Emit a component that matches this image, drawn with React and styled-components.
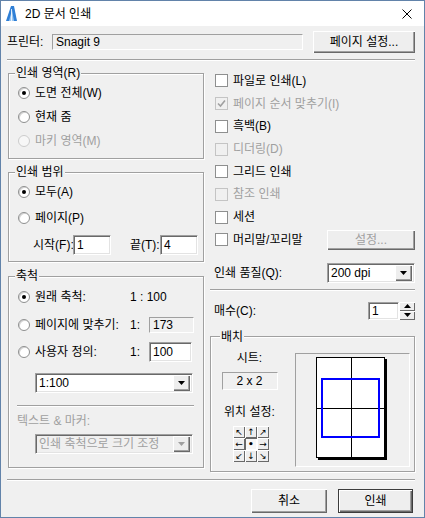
import styled, {createGlobalStyle} from 'styled-components'

const GlobalStyle = createGlobalStyle`
  html, body {
    margin: 0;
    padding: 0;
    background: #ffffff;
  }
  body {
    font-family: "Liberation Sans", "Noto Sans CJK KR", sans-serif;
    font-size: 12px;
    color: #000000;
  }
  * {
    box-sizing: border-box;
  }
`

const DownArrow = ({color = '#000'}) => (
  <svg width="7" height="4" viewBox="0 0 7 4">
    <path d="M0 0H7L3.5 4Z" fill={color} />
  </svg>
)

const UpArrow = () => (
  <svg width="7" height="4" viewBox="0 0 7 4">
    <path d="M0 4H7L3.5 0Z" fill="#000" />
  </svg>
)

const Combo = ({width, text, disabled}) => (
  <ComboBox $w={width} $disabled={disabled}>
    <ComboText $disabled={disabled}>{text}</ComboText>
    <DropButton>
      <DownArrow color={disabled ? '#a0a0a0' : '#000'} />
    </DropButton>
  </ComboBox>
)

const Radio = ({checked, disabled, children, labelWidth}) => (
  <RadioLabel>
    <RadioCircle $checked={checked} $disabled={disabled} />
    <OptionText $disabled={disabled} $w={labelWidth}>
      {children}
    </OptionText>
  </RadioLabel>
)

const Check = ({checked, disabled, children}) => (
  <CheckRow>
    <CheckBox $disabled={disabled}>
      {checked && (
        <svg width="9" height="9" viewBox="0 0 9 9">
          <path d="M1 4.5L3.5 7L8 1.5" stroke={disabled ? '#a0a0a0' : '#000'} strokeWidth="1.6" fill="none" />
        </svg>
      )}
    </CheckBox>
    <OptionText $disabled={disabled}>{children}</OptionText>
  </CheckRow>
)

const arrows = ['↖', '↑', '↗', '←', '•', '→', '↙', '↓', '↘']

export default function App() {
  return (
    <>
      <GlobalStyle />
      <Window>
        <TitleBar>
          <svg width="13" height="15" viewBox="0 0 13 15">
            <path d="M1 15L6 0H9L12 15Z" fill="#2f7fd6" />
            <path d="M4 15L7 4L9 15Z" fill="#9cc8f2" />
            <path d="M6.5 3V15" stroke="#ffffff" strokeWidth="0.8" />
          </svg>
          <TitleText>2D 문서 인쇄</TitleText>
          <CloseIcon width="14" height="10" viewBox="0 0 10 10">
            <path d="M0.5 0.5L9.5 9.5M9.5 0.5L0.5 9.5" stroke="#000" strokeWidth="1" />
          </CloseIcon>
        </TitleBar>

        <Content>
          <PrinterRow>
            <PrinterLabel>프린터:</PrinterLabel>
            <Field $w={251} $h={16} $flat $ro>Snagit 9</Field>
            <Button $w={102} $h={22} $push>
              페이지 설정...
            </Button>
          </PrinterRow>

          <Etched $mt={6} />

          <Columns>
            <LeftColumn>
              <Group $mt={5}>
                <Legend>인쇄 영역(R)</Legend>
                <GroupBody $pad="1px 0 5px 9px">
                  <RadioRow $h={24}>
                    <Radio checked>도면 전체(W)</Radio>
                  </RadioRow>
                  <RadioRow $h={24}>
                    <Radio>현재 줌</Radio>
                  </RadioRow>
                  <RadioRow $h={24}>
                    <Radio disabled>마키 영역(M)</Radio>
                  </RadioRow>
                </GroupBody>
              </Group>

              <Group $mt={6}>
                <Legend>인쇄 범위</Legend>
                <GroupBody $pad="0 0 6px 9px">
                  <RadioRow $h={26}>
                    <Radio checked>모두(A)</Radio>
                  </RadioRow>
                  <RadioRow $h={26}>
                    <Radio>페이지(P)</Radio>
                  </RadioRow>
                  <RangeRow>
                    <RangeLabel $w={40}>시작(F):</RangeLabel>
                    <Field $w={38} $h={20}>1</Field>
                    <RangeLabel $w={30} $ml={19}>끝(T):</RangeLabel>
                    <Field $w={38} $h={20}>4</Field>
                  </RangeRow>
                </GroupBody>
              </Group>

              <Group $mt={7}>
                <Legend>축척</Legend>
                <GroupBody $pad="0.5px 0 0 9px">
                  <RadioRow $h={27.5}>
                    <Radio checked labelWidth={95}>원래 축척:</Radio>
                    <ScaleValue>1 : 100</ScaleValue>
                  </RadioRow>
                  <RadioRow $h={27.5}>
                    <Radio labelWidth={95}>페이지에 맞추기:</Radio>
                    <ScaleValue $w={19}>1:</ScaleValue>
                    <Field $w={45} $h={16} $flat $ro>173</Field>
                  </RadioRow>
                  <RadioRow $h={27.5}>
                    <Radio labelWidth={95}>사용자 정의:</Radio>
                    <ScaleValue $w={19}>1:</ScaleValue>
                    <Field $w={43} $h={20}>100</Field>
                  </RadioRow>
                </GroupBody>
                <ComboIndent $mt={7}>
                  <Combo width={158} text="1:100" />
                </ComboIndent>
                <GroupRule />
                <TextMarkerLabel>텍스트 &amp; 마커:</TextMarkerLabel>
                <ComboIndent $mt={6}>
                  <Combo width={158} text="인쇄 축척으로 크기 조정" disabled />
                </ComboIndent>
                <GroupSpacer $h={13} />
              </Group>
            </LeftColumn>

            <RightColumn>
              <CheckList>
                <Check>파일로 인쇄(L)</Check>
                <Check checked disabled>페이지 순서 맞추기(I)</Check>
                <Check>흑백(B)</Check>
                <Check disabled>디더링(D)</Check>
                <Check>그리드 인쇄</Check>
                <Check disabled>참조 인쇄</Check>
                <Check>세션</Check>
                <CheckRow>
                  <CheckBox />
                  <OptionText>머리말/꼬리말</OptionText>
                  <Button $w={88} $h={20} $push disabled>
                    설정...
                  </Button>
                </CheckRow>
              </CheckList>

              <SettingRow $mt={11.6} $h={20}>
                <SettingLabel>인쇄 품질(Q):</SettingLabel>
                <Combo width={88} text="200 dpi" />
              </SettingRow>

              <Etched $mt={6} />

              <SettingRow $mt={11} $h={18}>
                <SettingLabel>매수(C):</SettingLabel>
                <Spin>
                  <Field $w={31} $h={18}>1</Field>
                  <SpinButtons>
                    <SpinButton>
                      <UpArrow />
                    </SpinButton>
                    <SpinButton>
                      <DownArrow />
                    </SpinButton>
                  </SpinButtons>
                </Spin>
              </SettingRow>

              <Group $mt={10}>
                <Legend $ml={9}>배치</Legend>
                <LayoutBody>
                  <LayoutSide>
                    <CenterText $mt={7}>시트:</CenterText>
                    <Field $w={56} $h={18} $flat $ro $center $mt={7}>
                      2 x 2
                    </Field>
                    <CenterText $mt={15}>위치 설정:</CenterText>
                    <PositionGrid>
                      {arrows.map((a, i) => (
                        <PositionButton key={i} $active={i === 4}>
                          {a}
                        </PositionButton>
                      ))}
                    </PositionGrid>
                  </LayoutSide>
                  <Preview>
                    <svg width="113" height="112" viewBox="0 0 113 112">
                      <rect x="22" y="5" width="69" height="101" fill="#000" />
                      <rect x="20.5" y="3.5" width="68" height="100" fill="#fff" stroke="#000" strokeWidth="1" />
                      <path d="M55.5 4V103M21 54.5H88" stroke="#000" strokeWidth="1" />
                      <rect x="26" y="25" width="57" height="58" fill="none" stroke="#0000ff" strokeWidth="2" />
                    </svg>
                  </Preview>
                </LayoutBody>
              </Group>
            </RightColumn>
          </Columns>

          <Etched $mt={7} />

          <Footer>
            <Button $w={76} $h={24}>취소</Button>
            <Button $w={75} $h={24} $default>
              인쇄
            </Button>
          </Footer>
        </Content>
      </Window>
    </>
  )
}

const Window = styled.div`
  width: 425px;
  height: 518px;
  border: 1px solid #6283aa;
  background-color: #f0f0f0;
  display: flex;
  flex-direction: column;
  overflow: hidden;
`

const TitleBar = styled.div`
  height: 25px;
  background-color: #ffffff;
  display: flex;
  align-items: center;
  padding-left: 4px;
  flex-shrink: 0;
`

const TitleText = styled.span`
  margin-left: 7px;
  font-size: 12px;
  line-height: 14px;
  color: #000000;
`

const CloseIcon = styled.svg`
  margin-left: auto;
  margin-right: 10px;
`

const Content = styled.div`
  padding: 5px 9px 0 6px;
  display: flex;
  flex-direction: column;
`

const PrinterRow = styled.div`
  height: 22px;
  display: flex;
  align-items: center;
`

const PrinterLabel = styled.span`
  width: 45px;
  line-height: 14px;
`

const Field = styled.div`
  width: ${p => p.$w}px;
  height: ${p => p.$h}px;
  margin-top: ${p => p.$mt || 0}px;
  background-color: ${p => (p.$ro ? '#f0f0f0' : '#ffffff')};
  border: 1px solid;
  border-color: #a0a0a0 #ffffff #ffffff #a0a0a0;
  box-shadow: ${p => (p.$flat ? 'none' : 'inset 1px 1px 0 #696969, inset -1px -1px 0 #e3e3e3')};
  display: flex;
  align-items: center;
  justify-content: ${p => (p.$center ? 'center' : 'flex-start')};
  padding-left: ${p => (p.$center ? 0 : 3)}px;
  line-height: 14px;
  white-space: nowrap;
  flex-shrink: 0;
`

const Button = styled.button`
  width: ${p => p.$w}px;
  height: ${p => p.$h}px;
  margin-left: ${p => (p.$push ? 'auto' : '0')};
  font: inherit;
  line-height: 14px;
  color: ${p => (p.disabled ? '#a0a0a0' : '#000000')};
  background-color: #eeeeee;
  border: ${p => (p.$default ? '1px solid #3c3c3c' : 'none')};
  box-shadow: inset 1px 1px 0 #ffffff, inset -1px -1px 0 #696969, inset -2px -2px 0 #a0a0a0;
  padding: 0;
  outline: none;
  flex-shrink: 0;
`

const Etched = styled.div`
  height: 2px;
  margin-top: ${p => p.$mt || 0}px;
  border-top: 1px solid #a0a0a0;
  border-bottom: 1px solid #ffffff;
  flex-shrink: 0;
`

const Columns = styled.div`
  display: flex;
  gap: 6px;
  padding-left: 1px;
`

const LeftColumn = styled.div`
  width: 196px;
  display: flex;
  flex-direction: column;
`

const RightColumn = styled.div`
  width: 205px;
  display: flex;
  flex-direction: column;
`

const Group = styled.fieldset`
  margin: ${p => p.$mt || 0}px 0 0 0;
  padding: 0;
  min-width: 0;
  border: 1px solid #a0a0a0;
  box-shadow: inset 1px 1px 0 #ffffff, 1px 1px 0 #ffffff;
`

const Legend = styled.legend`
  margin-left: ${p => p.$ml ?? 6}px;
  padding: 0 1px;
  font-size: 12px;
  line-height: 14px;
  background-color: #f0f0f0;
  color: #000000;
`

const GroupBody = styled.div`
  padding: ${p => p.$pad};
  display: flex;
  flex-direction: column;
`

const GroupSpacer = styled.div`
  height: ${p => p.$h}px;
`

const RadioRow = styled.div`
  height: ${p => p.$h}px;
  display: flex;
  align-items: center;
`

const RadioLabel = styled.label`
  display: flex;
  align-items: center;
`

const RadioCircle = styled.span`
  width: 12px;
  height: 12px;
  border-radius: 50%;
  background-color: ${p => (p.$disabled ? '#f7f7f7' : '#ffffff')};
  border: 1px solid ${p => (p.$disabled ? '#cccccc' : '#8e8f8f')};
  box-shadow: ${p => (p.$disabled ? 'none' : 'inset 1px 1px 0 #d4d4d4')};
  display: flex;
  align-items: center;
  justify-content: center;
  flex-shrink: 0;

  &::after {
    content: '';
    width: 4px;
    height: 4px;
    border-radius: 50%;
    background-color: #000000;
    display: ${p => (p.$checked ? 'block' : 'none')};
  }
`

const OptionText = styled.span`
  margin-left: 5px;
  line-height: 14px;
  white-space: nowrap;
  color: ${p => (p.$disabled ? '#a0a0a0' : '#000000')};
  width: ${p => (p.$w ? `${p.$w}px` : 'auto')};
`

const ScaleValue = styled.span`
  width: ${p => (p.$w ? `${p.$w}px` : 'auto')};
  line-height: 14px;
  white-space: nowrap;
`

const RangeRow = styled.div`
  height: 20px;
  margin-top: 4px;
  display: flex;
  align-items: center;
  padding-left: 15px;
`

const RangeLabel = styled.span`
  width: ${p => p.$w}px;
  margin-left: ${p => p.$ml || 0}px;
  line-height: 14px;
  white-space: nowrap;
`

const ComboIndent = styled.div`
  margin-top: ${p => p.$mt}px;
  padding-left: 26px;
  display: flex;
`

const ComboBox = styled.div`
  width: ${p => p.$w}px;
  height: 20px;
  background-color: ${p => (p.$disabled ? '#f0f0f0' : '#ffffff')};
  border: 1px solid;
  border-color: #a0a0a0 #ffffff #ffffff #a0a0a0;
  box-shadow: inset 1px 1px 0 #696969, inset -1px -1px 0 #e3e3e3;
  display: flex;
  align-items: center;
  padding: 2px 2px 2px 3px;
  flex-shrink: 0;
`

const ComboText = styled.span`
  flex: 1;
  line-height: 14px;
  white-space: nowrap;
  overflow: hidden;
  color: ${p => (p.$disabled ? '#a0a0a0' : '#000000')};
`

const DropButton = styled.span`
  width: 17px;
  height: 16px;
  background-color: #eeeeee;
  box-shadow: inset 1px 1px 0 #ffffff, inset -1px -1px 0 #696969, inset -2px -2px 0 #a0a0a0;
  display: flex;
  align-items: center;
  justify-content: center;
  flex-shrink: 0;
`

const GroupRule = styled.div`
  margin: 12px 0 0 8px;
  width: 177px;
  height: 2px;
  border-top: 1px solid #a0a0a0;
  border-bottom: 1px solid #ffffff;
`

const TextMarkerLabel = styled.div`
  margin: 7px 0 0 8px;
  line-height: 14px;
  color: #a0a0a0;
`

const CheckList = styled.div`
  margin-top: 8.6px;
  display: flex;
  flex-direction: column;
`

const CheckRow = styled.div`
  height: 22.7px;
  display: flex;
  align-items: center;
  padding-left: 5px;
`

const CheckBox = styled.span`
  width: 13px;
  height: 13px;
  background-color: ${p => (p.$disabled ? '#f0f0f0' : '#ffffff')};
  border: 1px solid;
  border-color: ${p => (p.$disabled ? '#c4c4c4' : '#8e8f8f')};
  display: flex;
  align-items: center;
  justify-content: center;
  flex-shrink: 0;
`

const SettingRow = styled.div`
  margin-top: ${p => p.$mt}px;
  height: ${p => p.$h}px;
  display: flex;
  align-items: center;
  justify-content: space-between;
  padding-left: 4px;
`

const SettingLabel = styled.span`
  line-height: 14px;
  white-space: nowrap;
`

const Spin = styled.div`
  display: flex;
`

const SpinButtons = styled.div`
  width: 16px;
  height: 18px;
  display: flex;
  flex-direction: column;
`

const SpinButton = styled.span`
  height: 9px;
  background-color: #eeeeee;
  box-shadow: inset 1px 1px 0 #ffffff, inset -1px -1px 0 #696969;
  display: flex;
  align-items: center;
  justify-content: center;
`

const LayoutBody = styled.div`
  display: flex;
  padding: 0 4px 4px 1px;
`

const LayoutSide = styled.div`
  width: 76px;
  margin-right: 8px;
  display: flex;
  flex-direction: column;
  align-items: center;
`

const CenterText = styled.div`
  margin-top: ${p => p.$mt}px;
  line-height: 14px;
  white-space: nowrap;
`

const PositionGrid = styled.div`
  margin-top: 7px;
  margin-left: 3px;
  display: grid;
  grid-template-columns: repeat(3, 12px);
  grid-template-rows: repeat(3, 12px);
`

const PositionButton = styled.span`
  font-family: "DejaVu Sans", sans-serif;
  font-size: 9px;
  line-height: 12px;
  text-align: center;
  background-color: ${p => (p.$active ? '#f7f7f7' : '#eeeeee')};
  box-shadow: ${p =>
    p.$active
      ? 'inset 1px 1px 0 #696969, inset -1px -1px 0 #ffffff'
      : 'inset 1px 1px 0 #ffffff, inset -1px -1px 0 #696969'};
  font-weight: ${p => (p.$active ? 'bold' : 'normal')};
`

const Preview = styled.div`
  margin-top: 9px;
  width: 115px;
  height: 114px;
  border: 1px solid;
  border-color: #a0a0a0 #ffffff #ffffff #a0a0a0;
  display: flex;
`
const Footer = styled.div`
  margin-top: 8px;
  display: flex;
  justify-content: flex-end;
  gap: 11px;
  padding-right: 2px;
`
